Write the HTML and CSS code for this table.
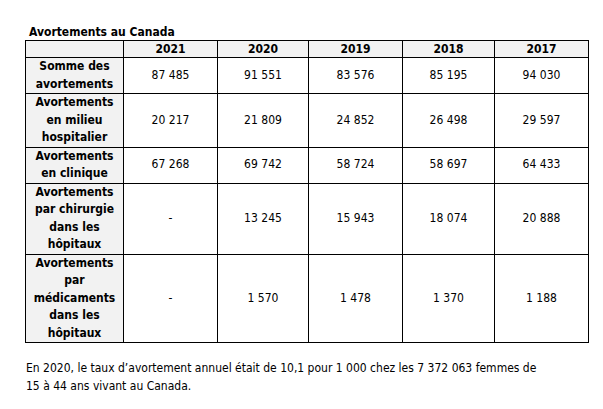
FILE: index.html
```html
<!DOCTYPE html>
<html lang="fr">
<head>
<meta charset="utf-8">
<link rel="stylesheet" href="styles.css">
</head>
<body>
<div class="page">
  <div class="title">Avortements au Canada</div>
  <table class="data">
    <colgroup>
      <col class="c-label"><col class="c-y1"><col class="c-y2"><col class="c-y3"><col class="c-y4"><col class="c-y5">
    </colgroup>
    <thead>
      <tr class="head">
        <th class="corner"></th><th>2021</th><th>2020</th><th>2019</th><th>2018</th><th>2017</th>
      </tr>
    </thead>
    <tbody>
      <tr>
        <th>Somme des<br>avortements</th><td>87 485</td><td>91 551</td><td>83 576</td><td>85 195</td><td>94 030</td>
      </tr>
      <tr>
        <th>Avortements<br>en milieu<br>hospitalier</th><td>20 217</td><td>21 809</td><td>24 852</td><td>26 498</td><td>29 597</td>
      </tr>
      <tr>
        <th>Avortements<br>en clinique</th><td>67 268</td><td>69 742</td><td>58 724</td><td>58 697</td><td>64 433</td>
      </tr>
      <tr>
        <th>Avortements<br>par chirurgie<br>dans les<br>hôpitaux</th><td>-</td><td>13 245</td><td>15 943</td><td>18 074</td><td>20 888</td>
      </tr>
      <tr>
        <th>Avortements<br>par<br>médicaments<br>dans les<br>hôpitaux</th><td>-</td><td>1 570</td><td>1 478</td><td>1 370</td><td>1 188</td>
      </tr>
    </tbody>
  </table>
  <p class="note">En 2020, le taux d’avortement annuel était de 10,1 pour 1 000 chez les 7 372 063 femmes de 15 à 44 ans vivant au Canada.</p>
</div>
</body>
</html>
```
FILE: styles.css
```css
html, body {
  margin: 0;
  padding: 0;
  background: #ffffff;
}
body {
  font-family: "DejaVu Sans Condensed", "DejaVu Sans", sans-serif;
  font-size: 12px;
  color: #000000;
}
.page {
  padding: 24px 0 0 25px;
}
.title {
  font-weight: bold;
  font-size: 12px;
  line-height: 16px;
  padding-left: 4px;
}
.data {
  border-collapse: collapse;
  table-layout: fixed;
  width: 563px;
}
.c-label { width: 98px; }
.c-y1 { width: 94px; }
.c-y2 { width: 91px; }
.c-y3 { width: 94px; }
.c-y4 { width: 92px; }
.c-y5 { width: 94px; }
.data th, .data td {
  border: 1px solid #000000;
  text-align: center;
  vertical-align: middle;
  padding: 0;
  line-height: 17.5px;
}
.data th {
  font-weight: bold;
  background: #f2f2f2;
}
.data td {
  background: #ffffff;
}
.data .head th {
  line-height: 16px;
}
.note {
  margin: 16px 0 0 1px;
  width: 515px;
  line-height: 18px;
}
```
